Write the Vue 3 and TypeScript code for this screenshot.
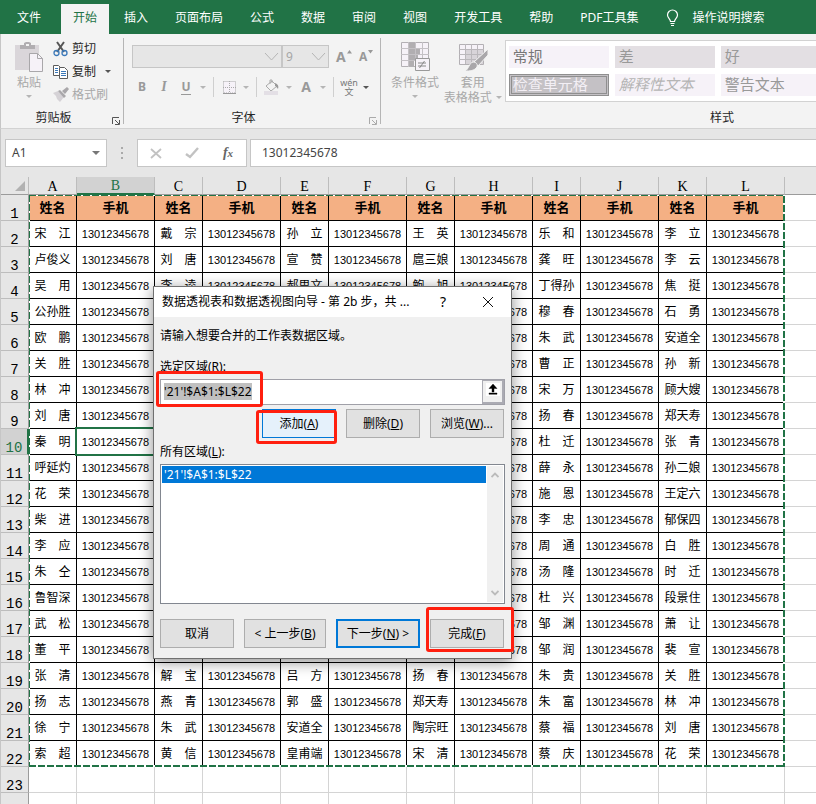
<script setup lang="ts">
import { onMounted, ref } from 'vue'

interface Column {
  letter: string
  kind: 'name' | 'phone'
}

interface StyleItem {
  label: string
  variant: string
}

const tabs: string[] = ['插入', '页面布局', '公式', '数据', '审阅', '视图', '开发工具', '帮助', 'PDF工具集']

const columns: Column[] = 'ABCDEFGHIJKL'.split('').map((letter, i) => ({
  letter,
  kind: i % 2 === 0 ? 'name' : 'phone',
}))

const phone = '13012345678'

const names: string[][] = [
  ['宋　江', '戴　宗', '孙　立', '王　英', '乐　和', '李　立'],
  ['卢俊义', '刘　唐', '宣　赞', '扈三娘', '龚　旺', '李　云'],
  ['吴　用', '李　逵', '郝思文', '鲍　旭', '丁得孙', '焦　挺'],
  ['公孙胜', '', '', '', '穆　春', '石　勇'],
  ['欧　鹏', '', '', '', '朱　武', '安道全'],
  ['关　胜', '', '', '', '曹　正', '孙　新'],
  ['林　冲', '', '', '', '宋　万', '顾大嫂'],
  ['刘　唐', '', '', '', '扬　春', '郑天寿'],
  ['秦　明', '', '', '', '杜　迁', '张　青'],
  ['呼延灼', '', '', '', '薛　永', '孙二娘'],
  ['花　荣', '', '', '', '施　恩', '王定六'],
  ['柴　进', '', '', '', '李　忠', '郁保四'],
  ['李　应', '', '', '', '周　通', '白　胜'],
  ['朱　仝', '', '', '', '汤　隆', '时　迁'],
  ['鲁智深', '', '', '', '杜　兴', '段景住'],
  ['武　松', '', '', '', '邹　渊', '萧　让'],
  ['董　平', '', '', '', '邹　润', '裴　宣'],
  ['张　清', '解　宝', '吕　方', '扬　春', '朱　贵', '关　胜'],
  ['扬　志', '燕　青', '郭　盛', '郑天寿', '朱　富', '林　冲'],
  ['徐　宁', '朱　武', '安道全', '陶宗旺', '蔡　福', '刘　唐'],
  ['索　超', '黄　信', '皇甫端', '宋　清', '蔡　庆', '花　荣'],
]

const styleItems: StyleItem[] = [
  { label: '常规', variant: 'normal' },
  { label: '差', variant: 'shaded' },
  { label: '好', variant: 'shaded' },
  { label: '检查单元格', variant: 'check' },
  { label: '解释性文本', variant: 'explain' },
  { label: '警告文本', variant: 'warn' },
]

const activeRow = 10
const activeColumn = 'B'
const formula = ref(phone)
const range = ref("'21'!$A$1:$L$22")
const chosen = ref(range.value)
const rangeInput = ref<HTMLInputElement | null>(null)

// Columns D and F carry a number only in rows whose name is filled in.
function cellText(row: number, col: number): string {
  const name = names[row][Math.floor(col / 2)]
  if (col % 2 === 0) return name
  return name || col === 7 ? phone : ''
}

onMounted(() => {
  rangeInput.value?.focus()
  rangeInput.value?.select()
})
</script>

<template>
  <div class="window">
    <nav class="tabs">
      <button class="tab file" type="button">文件</button>
      <button class="tab active" type="button">开始</button>
      <button v-for="tab in tabs" :key="tab" class="tab" type="button">{{ tab }}</button>
      <button class="tell" type="button">
        <svg width="14" height="18" viewBox="0 0 14 18" fill="none" stroke="#fff" stroke-width="1.2">
          <path d="M4.500 12.500c0-2.500-3-3.500-3-6.500a5 5 0 0 1 10 0c0 3-3 4-3 6.500zM4.500 14.500h4M5 16.500h3" />
        </svg>
        <span>操作说明搜索</span>
      </button>
    </nav>

    <div class="ribbon">
      <section class="group clipboard">
        <div class="tools">
          <button class="big paste" type="button">
            <svg width="30" height="32" viewBox="0 0 30 32">
              <path d="M1 3h24v25H1z" fill="#dad6da" />
              <path d="M6 3h4V1l2-1h3l2 1v2h4v4H6z" fill="#b1aeb1" />
              <path d="M12 2h3v2h-3z" fill="#f3f3f3" />
              <path d="M15.500 11.500h8l5 5v13h-13z" fill="#f6f2f8" stroke="#a9a7aa" />
              <path d="M23.500 11.500v5h5" fill="none" stroke="#a9a7aa" />
            </svg>
            <span>粘贴</span>
            <i class="caret"></i>
          </button>
          <div class="stack">
            <button class="line" type="button">
              <svg width="16" height="16" viewBox="0 0 16 16" fill="none">
                <path d="M4 1l7 10M11 1L4 11" stroke="#555" stroke-width="2" />
                <circle cx="3.500" cy="12" r="2.500" stroke="#3b78b8" stroke-width="1.300" />
                <circle cx="11.500" cy="12" r="2.500" stroke="#3b78b8" stroke-width="1.300" />
              </svg>
              剪切
            </button>
            <button class="line" type="button">
              <svg width="16" height="16" viewBox="0 0 16 16">
                <path d="M.5 1.500h5l3 3v7h-8z" fill="#fff" stroke="#5c5c5c" />
                <path d="M2 4.500h3M2 6.500h3M2 8.500h3" stroke="#3b78b8" />
                <path d="M6.500 3.500h5l3 3v8h-8z" fill="#fff" stroke="#5c5c5c" />
                <path d="M8 7.500h5M8 9.500h5M8 11.500h5" stroke="#3b78b8" />
              </svg>
              复制
              <i class="caret dark"></i>
            </button>
            <button class="line off" type="button">
              <svg width="16" height="16" viewBox="0 0 16 16">
                <path d="M0 6l5-2 6 6-4 5-3-3-1-3z" fill="#d5d2d6" />
                <path d="M5 4l2-1 6 6-2 2zM9 4l5-4 2 2-4 5z" fill="#a9a7aa" />
              </svg>
              格式刷
            </button>
          </div>
        </div>
        <footer>
          <span>剪贴板</span>
          <svg class="launch" width="8" height="8" viewBox="0 0 8 8" fill="none" stroke="#555">
            <path d="M.5 7V.5H7M3 3l4 4M7.500 3v4.500H3" />
          </svg>
        </footer>
      </section>

      <section class="group font">
        <div class="combos">
          <label class="combo face">
            <select aria-label="字体" disabled><option></option></select>
            <svg width="15" height="9" viewBox="0 0 15 9" fill="none" stroke="#b5b5b5"><path d="M1 1l6.500 7L14 1" /></svg>
          </label>
          <label class="combo size">
            <select aria-label="字号" disabled><option>9</option></select>
            <svg width="15" height="9" viewBox="0 0 15 9" fill="none" stroke="#b5b5b5"><path d="M1 1l6.500 7L14 1" /></svg>
          </label>
          <button class="grow" type="button"><b>A</b><svg width="5" height="4" viewBox="0 0 5 4"><path d="M0 3.500L2.500 0 5 3.500z" fill="#999" /></svg></button>
          <button class="grow small" type="button"><b>A</b><svg width="5" height="4" viewBox="0 0 5 4"><path d="M0 0h5L2.500 3.500z" fill="#999" /></svg></button>
        </div>
        <div class="formats">
          <button class="glyph" type="button"><b>B</b></button>
          <button class="glyph" type="button"><b class="italic">I</b></button>
          <button class="glyph" type="button"><b class="under">U</b></button>
          <button class="drop" type="button" aria-label="下划线选项"><i class="caret"></i></button>
          <span class="rule"></span>
          <button class="glyph" type="button" aria-label="边框">
            <svg width="13" height="13" viewBox="0 0 13 13" fill="#f6f2f8" stroke="#aaa"><path d="M.5.5h12v11.500H.5zM6.500 0v12M0 6.500h13" stroke-dasharray="1 1" /><path d="M0 12.500h13" stroke="#999" /></svg>
          </button>
          <button class="drop" type="button" aria-label="边框选项"><i class="caret"></i></button>
          <span class="rule"></span>
          <button class="glyph" type="button" aria-label="填充颜色">
            <svg width="16" height="16" viewBox="0 0 16 16"><path d="M2 7l6-5 5 5-6 5zM6 5V1h2v3" fill="none" stroke="#aaa" /><path d="M11 4c3 1 4 3 3 6-1-1-2-3-3-3z" fill="#999" /><path d="M0 12h14v4H0z" fill="#e3dfe5" /></svg>
          </button>
          <button class="drop" type="button" aria-label="填充选项"><i class="caret"></i></button>
          <button class="glyph" type="button"><b class="large">A</b></button>
          <button class="drop" type="button" aria-label="字体颜色选项"><i class="caret"></i></button>
          <span class="rule"></span>
          <button class="glyph pinyin" type="button"><span>wén</span><span>文</span></button>
          <button class="drop" type="button" aria-label="拼音选项"><i class="caret dark"></i></button>
        </div>
        <footer>
          <span>字体</span>
          <svg class="launch" width="8" height="8" viewBox="0 0 8 8" fill="none" stroke="#aaa">
            <path d="M.5 7V.5H7M3 3l4 4M7.500 3v4.500H3" />
          </svg>
        </footer>
      </section>

      <section class="group styles">
        <div class="tools">
          <button class="big cond" type="button">
            <svg width="30" height="32" viewBox="0 0 30 32">
              <path d="M1.500.5h27v24h-27z" fill="#f6f2f8" stroke="#b3b0b4" />
              <path d="M9 1h6v5H9zM9 7h11v5H9zM9 13h9v5H9zM9 19h5v5H9z" fill="#b1aeb1" />
              <path d="M8.500 0v25M15.500 0v25M22.500 0v25M1 6.500h28M1 12.500h28M1 18.500h28" stroke="#c4c1c5" />
              <path d="M15.500 16.500h14v12h-14z" fill="#f6f2f8" stroke="#999" />
              <path d="M18 21h8M18 24h8M24.500 19l-5 7" stroke="#888" />
            </svg>
            <span>条件格式</span>
            <i class="caret"></i>
          </button>
          <button class="big fmt" type="button">
            <svg width="30" height="32" viewBox="0 0 30 32">
              <path d="M1.500 2.500h24v20h-24z" fill="#f6f2f8" stroke="#b3b0b4" />
              <path d="M8 8h17v14H8z" fill="#d8d4d9" />
              <path d="M7.500 2v20M13.500 2v20M19.500 2v20M1 7.500h25M1 12.500h25M1 17.500h25" stroke="#bbb8bc" />
              <path d="M30 7v6L20 24l-4-4z" fill="#a9a7aa" stroke="#f3f3f3" />
              <path d="M15 20c3 0 5 2 4 5-3 4-7 4-12 4 4-2 4-8 8-9z" fill="#a9a7aa" stroke="#f3f3f3" />
            </svg>
            <span>套用</span>
            <span class="with-caret">表格格式<i class="caret"></i></span>
          </button>
          <div class="gallery">
            <button v-for="item in styleItems" :key="item.label" type="button" :class="['swatch', item.variant]">{{ item.label }}</button>
          </div>
        </div>
        <footer><span>样式</span></footer>
      </section>
    </div>

    <div class="formula-row">
      <button class="name-box" type="button"><span>A1</span><i class="caret wide"></i></button>
      <svg class="dots" width="3" height="12" viewBox="0 0 3 12" fill="#aaa"><path d="M0 0h2v2H0zM0 5h2v2H0zM0 10h2v2H0z" /></svg>
      <div class="actions">
        <button type="button" aria-label="取消输入"><svg width="12" height="11" viewBox="0 0 12 11" fill="none" stroke="#c2c2c2" stroke-width="1.800"><path d="M1 1l10 9M11 1L1 10" /></svg></button>
        <button type="button" aria-label="输入"><svg width="14" height="12" viewBox="0 0 14 12" fill="none" stroke="#c2c2c2" stroke-width="2.400"><path d="M1 7l4 3 8-9" /></svg></button>
        <button type="button" class="fx">f<sub>x</sub></button>
      </div>
      <input v-model="formula" class="formula" aria-label="编辑栏" />
    </div>

    <div class="sheet">
      <table>
        <colgroup>
          <col class="c-head" />
          <col v-for="c in columns" :key="c.letter" :class="`c-${c.kind}`" />
          <col />
        </colgroup>
        <thead>
          <tr>
            <th class="corner"><svg width="10" height="10" viewBox="0 0 10 10"><path d="M10 0v10H0z" fill="#b2b2b2" /></svg></th>
            <th v-for="c in columns" :key="c.letter" :class="['letter', { on: c.letter === activeColumn }]">{{ c.letter }}</th>
            <th class="letter tail"></th>
          </tr>
        </thead>
        <tbody>
          <tr>
            <th class="number">1</th>
            <td v-for="c in columns" :key="c.letter" class="data title">{{ c.kind === 'name' ? '姓名' : '手机' }}</td>
            <td class="blank tail"></td>
          </tr>
          <tr v-for="(_, r) in names" :key="r">
            <th :class="['number', { on: r + 2 === activeRow }]">{{ r + 2 }}</th>
            <td v-for="(c, i) in columns" :key="c.letter" :class="['data', c.kind, { picked: r + 2 === activeRow && c.letter === activeColumn }]">{{ cellText(r, i) }}</td>
            <td class="blank tail"></td>
          </tr>
          <tr v-for="label in ['23', '']" :key="label">
            <th class="number">{{ label }}</th>
            <td v-for="c in columns" :key="c.letter" class="blank"></td>
            <td class="blank tail"></td>
          </tr>
        </tbody>
      </table>
      <svg class="ants" width="758" height="574" viewBox="0 0 758 574" fill="none">
        <path d="M1 1.500H757M1.500 1V573" stroke="#fff" />
        <path d="M756 1V573M1 572H757" stroke="#fff" stroke-width="2" />
        <path d="M1 1.500H757M1.500 1V573" stroke="#217346" stroke-dasharray="7 2" />
        <path d="M756 2V573M1 572H757" stroke="#217346" stroke-width="2" stroke-dasharray="7 2" />
      </svg>
    </div>

    <form class="dialog" role="dialog" @submit.prevent>
      <header>
        <h1>数据透视表和数据透视图向导 - 第 2b 步，共 ...</h1>
        <button type="button" class="help">?</button>
        <button type="button" class="close" aria-label="关闭"><svg width="12" height="12" viewBox="0 0 12 12" stroke="#111"><path d="M1 1l10 10M11 1L1 11" /></svg></button>
      </header>
      <div class="content">
        <p>请输入想要合并的工作表数据区域。</p>
        <label for="range">选定区域(<u>R</u>):</label>
        <div class="range">
          <input id="range" ref="rangeInput" v-model="range" />
          <button type="button" aria-label="折叠对话框"><svg width="14" height="13" viewBox="0 0 14 13"><path d="M7 1l4 4.500H8V9H6V5.500H3zM3 10h8v1.300H3z" fill="#000" stroke="#000" stroke-width=".4" /></svg></button>
        </div>
        <div class="buttons right">
          <button type="button" class="btn hot">添加(<u>A</u>)</button>
          <button type="button" class="btn">删除(<u>D</u>)</button>
          <button type="button" class="btn">浏览(<u>W</u>)...</button>
        </div>
        <label for="all-ranges">所有区域(<u>L</u>):</label>
        <div class="list">
          <select id="all-ranges" v-model="chosen" size="7"><option :value="range">{{ range }}</option></select>
          <div class="scroll">
            <svg width="8" height="6" viewBox="0 0 8 6" fill="none" stroke="#bbb" stroke-width="1.800"><path d="M.5 5L4 1.500 7.500 5" /></svg>
            <svg width="8" height="6" viewBox="0 0 8 6" fill="none" stroke="#bbb" stroke-width="1.800"><path d="M.5 1L4 4.500 7.500 1" /></svg>
          </div>
        </div>
        <div class="buttons">
          <button type="button" class="btn">取消</button>
          <button type="button" class="btn back">&lt; 上一步(<u>B</u>)</button>
          <button type="submit" class="btn next">下一步(<u>N</u>) &gt;</button>
          <button type="button" class="btn">完成(<u>F</u>)</button>
        </div>
      </div>
      <span class="mark mark-range"></span>
      <span class="mark mark-add"></span>
      <span class="mark mark-finish"></span>
    </form>
  </div>
</template>

<style>
body {
  background: #fff;
}
</style>

<style scoped>
.window {
  position: relative;
  box-sizing: border-box;
  height: 100vh;
  overflow: hidden;
  background: #fff;
  color: #262626;
  font-family: "Noto Sans", "Noto Sans CJK SC", sans-serif;
  font-size: 12px;
  line-height: 16px;
}
.window *,
.window *::after {
  box-sizing: border-box;
}
button {
  margin: 0;
  padding: 0;
  border: 0;
  background: none;
  color: inherit;
  font: inherit;
  white-space: nowrap;
}
svg {
  display: block;
  flex: none;
}
input,
select {
  font: inherit;
  outline: none;
  border-radius: 0;
}

/* Tab strip */
.tabs {
  display: flex;
  align-items: flex-end;
  gap: 3px;
  height: 34px;
  padding-left: 5px;
  background: #217346;
  color: #fff;
}
.tab {
  flex: none;
  height: 30px;
  padding: 0 12px 2px;
}
.tab.file {
  margin-right: 5px;
}
.tab.active {
  background: #f3f3f3;
  color: #217346;
}
.tell {
  display: flex;
  align-items: center;
  gap: 12px;
  height: 30px;
  padding: 0 0 2px;
  margin-left: 13px;
}

/* Ribbon */
.ribbon {
  display: flex;
  height: 95px;
  overflow: hidden;
  border-left: 1px solid #c6c6c6;
  border-bottom: 1px solid #d2d2d2;
  background: #f3f3f3;
}
.group {
  position: relative;
  display: flex;
  flex: none;
  flex-direction: column;
  padding-bottom: 2px;
}
.group + .group::after {
  content: "";
  position: absolute;
  left: -1px;
  top: 4px;
  bottom: 4px;
  width: 1px;
  background: #b5b5b5;
}
.group footer {
  position: relative;
  display: flex;
  justify-content: center;
  margin-top: auto;
  line-height: 16px;
}
.launch {
  position: absolute;
  right: 4px;
  bottom: 1px;
}
.clipboard {
  width: 123px;
}
.clipboard footer {
  padding-right: 18px;
}
.font {
  width: 257px;
}
.font footer {
  padding-right: 18px;
}
.styles {
  width: 682px;
}
.tools {
  display: flex;
}
.big {
  display: flex;
  flex-direction: column;
  align-items: center;
  height: 72px;
  padding-top: 8px;
  color: #a8a8a8;
  line-height: 15px;
}
.big svg {
  margin-bottom: 1px;
}
.big > .caret {
  margin-top: 5px;
}
.with-caret {
  display: flex;
  align-items: center;
  gap: 4px;
}
.paste {
  width: 50px;
  padding-left: 6px;
}
.cond {
  width: 68px;
}
.fmt {
  width: 48px;
}
.stack {
  display: flex;
  flex-direction: column;
  padding-top: 3px;
}
.line {
  display: flex;
  align-items: center;
  gap: 3px;
  height: 23px;
  padding-left: 2px;
}
.line .caret {
  margin-left: 6px;
}
.off {
  color: #a8a8a8;
}
.caret {
  width: 0;
  height: 0;
  border: 3px solid transparent;
  border-top-color: #b5b5b5;
  border-bottom-width: 0;
}
.caret.dark {
  border-top-color: #555;
}
.caret.wide {
  border-width: 4px 4px 0;
  border-top-color: #777;
}
.combos {
  display: flex;
  height: 34px;
  padding: 11px 0 0 8px;
}
.combo {
  position: relative;
  height: 23px;
}
.combo select {
  width: 100%;
  height: 100%;
  padding: 0 3px;
  border: 1px solid #c6c6c6;
  background: #e6e6e6;
  color: #a6a6a6;
  appearance: none;
  opacity: 1;
}
.combo svg {
  position: absolute;
  right: 3px;
  top: 7px;
}
.face {
  width: 150px;
}
.size {
  width: 47px;
}
.grow {
  display: flex;
  align-items: center;
  width: 22px;
  margin-left: 7px;
  color: #999;
  font-size: 14px;
}
.grow svg {
  margin: 0 0 10px 1px;
}
.grow.small {
  margin-left: 1px;
  font-size: 12px;
}
.formats {
  display: flex;
  align-items: center;
  height: 38px;
  padding-left: 7px;
}
.glyph {
  display: flex;
  flex: none;
  justify-content: center;
  width: 22px;
  color: #999;
}
.italic {
  font-family: "Liberation Serif", serif;
  font-size: 14px;
  font-style: italic;
}
.under {
  border-bottom: 1px solid #999;
  line-height: 14px;
}
.large {
  font-size: 14px;
}
.drop {
  display: flex;
  flex: none;
  justify-content: center;
  width: 12px;
  height: 16px;
  padding-top: 7px;
}
.rule {
  width: 1px;
  height: 20px;
  margin: 0 4px;
  background: #cfcfcf;
}
.pinyin {
  flex-direction: column;
  align-items: center;
  font-size: 9px;
  line-height: 9px;
  color: #777;
}
.gallery {
  display: grid;
  grid-template-columns: repeat(3, 100px);
  grid-auto-rows: 22px;
  gap: 6px;
  height: 62px;
  width: 560px;
  margin: 6px 0 0 8px;
  padding: 5px 3px;
  border: 1px solid #d2d2d2;
  background: #fff;
}
.swatch {
  padding: 0 4px 3px;
  background: #f6f2f8;
  color: #999;
  font-size: 15px;
  line-height: 18px;
  text-align: left;
}
.swatch.normal {
  color: #777;
}
.swatch.shaded {
  background: #e3dfe3;
}
.swatch.check {
  padding: 0 1px 2px;
  border: 3px double #8f8f8f;
  background: #c4c1c5;
  color: #f3eff5;
  line-height: 14px;
}
.swatch.explain {
  color: #b5b5b5;
  font-style: italic;
}

/* Formula bar */
.formula-row {
  display: flex;
  align-items: center;
  height: 48px;
  padding-left: 4px;
  border-left: 1px solid #c6c6c6;
  background: #e6e6e6;
  color: #444;
}
.name-box,
.actions,
.formula {
  height: 28px;
  border: 1px solid #c6c6c6;
  background: #fff;
}
.name-box {
  display: flex;
  align-items: center;
  justify-content: space-between;
  width: 102px;
  padding: 0 6px;
}
.dots {
  margin: 0 13px 0 14px;
}
.actions {
  display: flex;
  width: 110px;
}
.actions button {
  display: flex;
  flex: 1;
  align-items: center;
  justify-content: center;
}
.actions .fx {
  color: #666;
  font: italic bold 14px "Liberation Serif", serif;
}
.fx sub {
  font-size: 11px;
  line-height: 8px;
}
.formula {
  flex: 1;
  min-width: 0;
  margin-left: 3px;
  padding: 0 11px 2px;
  border-right: 0;
  color: #444;
}

/* Worksheet */
.sheet {
  position: relative;
  border-left: 1px solid #c6c6c6;
}
table {
  width: 100%;
  table-layout: fixed;
  border-collapse: separate;
  border-spacing: 0;
  color: #000;
}
.c-head {
  width: 28px;
}
.c-name {
  width: 48px;
}
.c-phone {
  width: 78px;
}
th,
td {
  height: 26px;
  padding: 0;
  font-weight: normal;
  text-align: center;
  white-space: nowrap;
  overflow: hidden;
}
.corner,
.letter {
  height: 18px;
  border-right: 1px solid #bdbdbd;
  border-bottom: 1px solid #9b9b9b;
  background: #e6e6e6;
  font-family: "Liberation Serif", serif;
  font-size: 14px;
  line-height: 14px;
  vertical-align: bottom;
}
.corner svg {
  margin: 0 3px 3px auto;
}
.letter.on {
  border-bottom: 2px solid #217346;
  background: #d2d2d2;
  color: #217346;
}
.number {
  border-right: 1px solid #9b9b9b;
  border-bottom: 1px solid #bdbdbd;
  background: #e6e6e6;
  font-family: "Liberation Mono", monospace;
  font-size: 14px;
  line-height: 12px;
  vertical-align: bottom;
}
.number.on {
  border-right: 2px solid #217346;
  background: #d2d2d2;
  color: #217346;
}
.data {
  border-right: 1px solid #000;
  border-bottom: 1px solid #000;
  font-family: "Liberation Sans", "Noto Sans CJK SC", sans-serif;
  font-size: 12px;
}
.data.phone {
  font-size: 11px;
}
.data.title {
  background: #f4b084;
  font-size: 13px;
  font-weight: bold;
}
.blank {
  border-right: 1px solid #d4d4d4;
  border-bottom: 1px solid #d4d4d4;
}
.tail {
  border-right: 0;
}
.picked {
  position: relative;
  overflow: visible;
}
.picked::after {
  content: "";
  position: absolute;
  inset: -2px;
  border: 2px solid #217346;
}
.ants {
  position: absolute;
  left: 27px;
  top: 17px;
}

/* Wizard window */
.dialog {
  position: absolute;
  left: 153px;
  top: 286px;
  width: 359px;
  border: 1px solid #707070;
  background: #f0f0f0;
  box-shadow: 0 3px 14px rgba(0, 0, 0, 0.45);
  color: #000;
}
.dialog header {
  display: flex;
  align-items: center;
  height: 30px;
  padding-left: 8px;
  background: #fff;
}
.dialog h1 {
  flex: 1;
  margin: 0;
  font: inherit;
}
.help {
  width: 44px;
  font-size: 14px;
}
.close {
  display: flex;
  justify-content: center;
  width: 46px;
}
.content {
  display: flex;
  flex-direction: column;
  padding: 11px 6px 10px;
}
.content p {
  margin: 0 0 15px;
}
.content label {
  line-height: 16px;
}
.range {
  display: flex;
  height: 26px;
  margin-top: 4px;
  border: 1px solid #a0a0a8;
  background: #fff;
}
.range input {
  flex: 1;
  min-width: 0;
  height: 22px;
  padding: 0 3px;
  border: 0;
  background: #fff;
  color: #000;
}
.range input::selection {
  background: #c0c0c0;
  color: #000;
}
.range button {
  display: flex;
  align-items: flex-start;
  justify-content: center;
  width: 22px;
  padding-top: 2px;
  border: 2px solid #ababb3;
  border-width: 1px 2px 2px 1px;
  background: #f0f0f0;
}
.range button svg {
  background: #fff;
}
.buttons {
  display: flex;
  gap: 10px;
  margin-top: 15px;
}
.buttons.right {
  justify-content: flex-end;
  margin: 4px 1px 6px 0;
}
.btn {
  width: 74px;
  height: 29px;
  border: 1px solid #adadad;
  background: #e1e1e1;
}
.btn.hot {
  border-color: #0078d7;
  background: #e5f1fb;
}
.btn.back {
  width: 82px;
}
.btn.next {
  width: 84px;
  border: 2px solid #0078d7;
}
.list {
  display: flex;
  height: 140px;
  margin-top: 4px;
  padding: 1px;
  border: 1px solid #828790;
  background: #fff;
}
.list select {
  flex: 1;
  padding: 0;
  border: 0;
  background: #fff;
  overflow: hidden;
}
.list option {
  min-height: 17px;
  padding: 0 2px;
  line-height: 17px;
}
.list option:checked {
  background: linear-gradient(#0078d7, #0078d7);
  -webkit-text-fill-color: #fff;
}
.scroll {
  display: flex;
  flex-direction: column;
  align-items: center;
  justify-content: space-between;
  width: 17px;
  padding: 6px 0;
  border-left: 1px solid #fff;
  background: #f0f0f0;
}
.mark {
  position: absolute;
  border: 3px solid #ff1f0f;
  border-radius: 3px;
  pointer-events: none;
}
.mark-range {
  left: 2px;
  top: 84px;
  width: 107px;
  height: 36px;
}
.mark-add {
  left: 102px;
  top: 123px;
  width: 81px;
  height: 34px;
}
.mark-finish {
  left: 272px;
  top: 320px;
  width: 88px;
  height: 45px;
}
</style>
